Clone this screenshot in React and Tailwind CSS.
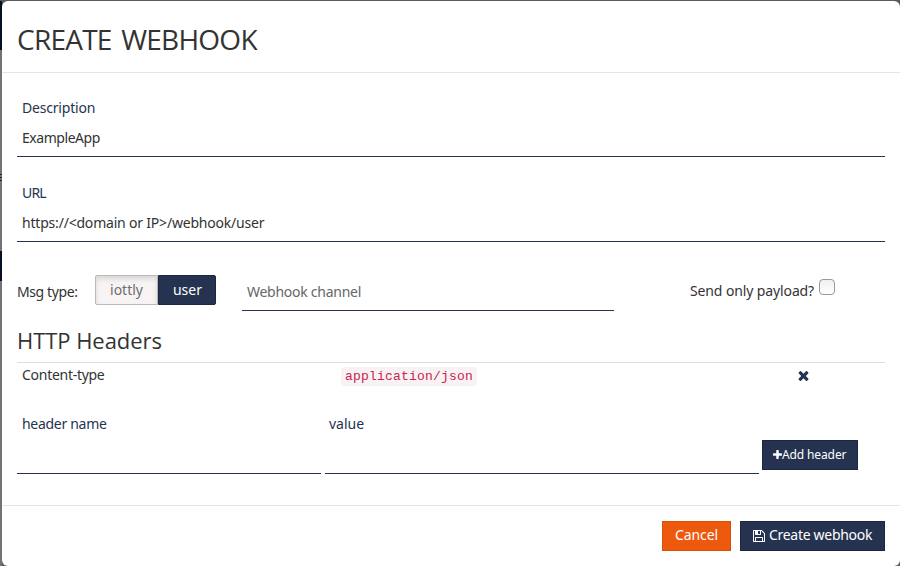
import React from "react";

const PLUS =
  "M1600 736v192q0 40-28 68t-68 28h-416v416q0 40-28 68t-68 28h-192q-40 0-68-28t-28-68v-416h-416q-40 0-68-28t-28-68v-192q0-40 28-68t68-28h416v-416q0-40 28-68t68-28h192q40 0 68 28t28 68v416h416q40 0 68 28t28 68z";
const TIMES =
  "M1490 1322q0 40-28 68l-136 136q-28 28-68 28t-68-28l-294-294-294 294q-28 28-68 28t-68-28l-136-136q-28-28-28-68t28-68l294-294-294-294q-28-28-28-68t28-68l136-136q28-28 68-28t68 28l294 294 294-294q28-28 68-28t68 28l136 136q28 28 28 68t-28 68l-294 294 294 294q28 28 28 68z";
const FLOPPY =
  "M384 1536h768v-384h-768v384zm896 0h128v-896q0-14-10-38.5t-20-34.5l-281-281q-10-10-34-20t-39-10v416q0 40-28 68t-68 28h-576q-40 0-68-28t-28-68v-416h-128v1280h128v-416q0-40 28-68t68-28h832q40 0 68 28t28 68v416zm-384-928v-320q0-13-9.5-22.5t-22.5-9.5h-192q-13 0-22.5 9.5t-9.5 22.5v320q0 13 9.5 22.5t22.5 9.5h192q13 0 22.5-9.5t9.5-22.5zm640 32v928q0 40-28 68t-68 28h-1344q-40 0-68-28t-28-68v-1344q0-40 28-68t68-28h928q40 0 88 20t76 48l280 280q28 28 48 76t20 88z";

function Icon({ path, box = "0 0 1792 1792", className }) {
  return (
    <svg viewBox={box} className={className} fill="currentColor" aria-hidden="true">
      <path d={path} />
    </svg>
  );
}

function Field({ label, value, labelClass, valueClass }) {
  return (
    <div className="flex h-[59px] flex-col border-b border-[#253350] pl-[5px]">
      <label className={`h-5 leading-5 text-[#253350] ${labelClass}`}>{label}</label>
      <span className={`mt-[10px] h-5 whitespace-nowrap leading-5 text-[#333] ${valueClass}`}>{value}</span>
    </div>
  );
}

export default function App() {
  return (
    <div className="flex h-[566px] w-[900px] overflow-hidden bg-[#5b5b5f] pt-px font-['Noto_Sans',sans-serif] text-[14px]">
      <div className="flex w-[2px] shrink-0 flex-col bg-[#737375]">
        <div className="h-[49px] bg-[#061022]" />
        <div className="mt-[124px] h-px bg-[#222]" />
        <div className="mt-[2px] h-px bg-[#222]" />
        <div className="mt-[2px] h-px bg-[#222]" />
        <div className="mt-[70px] h-[30px] bg-[#061022]" />
      </div>
      <div className="flex h-[565px] w-[898px] flex-col rounded-[6px] bg-white">
        <header className="flex h-[72px] items-center border-b border-[#e5e5e5] px-[15px] pt-[5px]">
          <h1 className="whitespace-nowrap font-['Open_Sans',sans-serif] text-[28px] font-normal leading-[33px] tracking-[-0.75px] [word-spacing:3px] text-[#333]">
            CREATE WEBHOOK
          </h1>
        </header>

        <main className="flex h-[432px] flex-col px-[15px] pt-[25px]">
          <Field label="Description" value="ExampleApp" labelClass="tracking-[-0.2px]" valueClass="tracking-[-0.45px]" />
          <div className="h-[26px]" />
          <Field label="URL" value="https://<domain or IP>/webhook/user" labelClass="tracking-[-0.8px]" valueClass="tracking-[-0.2px]" />

          <div className="mt-[33px] flex h-9 items-start text-[#333]">
            <span className="mt-[7px] w-[78px] whitespace-nowrap leading-5 tracking-[-0.4px]">Msg type:</span>
            <div className="flex h-[30px] w-[121px]">
              <button className="w-[63px] rounded-l-[2px] border border-[#bcb9ba] bg-[#f8f4f4] pb-px text-[#6f6d70] shadow-[inset_0_3px_5px_rgba(0,0,0,0.125)]">iottly</button>
              <button className="w-[58px] rounded-r-[2px] border border-[#1b2640] bg-[#253350] pb-px pl-px text-white">user</button>
            </div>
            <div className="ml-[26px] h-9 w-[372px] border-b border-[#253350] pl-[5px] pt-[7px] leading-5 tracking-[-0.26px] text-[#666]">
              <span>Webhook channel</span>
            </div>
            <label className="ml-[76px] mt-[6px] w-[125px] whitespace-nowrap leading-5 tracking-[-0.12px]">Send only payload?</label>
            <span className="ml-1 mt-1 size-4 shrink-0 rounded-[4px] border border-[#999] bg-gradient-to-b from-[#f0f0f0] to-white" />
          </div>

          <h2 className="mt-[14px] h-[38px] border-b border-[#ddd] font-['Open_Sans',sans-serif] text-[22px] leading-[30px] tracking-[-0.05px] text-[#333]">
            HTTP Headers
          </h2>
          <div className="flex h-[26px] items-center pl-[5px] text-[#333]">
            <span className="mb-[2px] w-[319px] leading-5 tracking-[-0.28px]">Content-type</span>
            <code className="h-[19px] w-[136px] rounded-[4px] bg-[#f9f2f4] pl-1 font-['Liberation_Mono',monospace] text-[13px] leading-[19px] tracking-[0.2px] text-[#c7254e]">
              application/json
            </code>
            <button className="mb-px ml-[319px] text-[#253350]" aria-label="Remove">
              <Icon path={TIMES} className="size-[15px]" />
            </button>
          </div>

          <div className="mt-[25px] flex items-start text-[#253350]">
            <div className="h-[60px] w-[304px] border-b border-[#253350] pl-[5px] leading-5 tracking-[-0.3px]">header name</div>
            <div className="ml-1 h-[60px] w-[434px] border-b border-[#253350] pl-1 leading-5">value</div>
            <button className="ml-[3px] mt-[26px] flex h-[30px] w-24 items-center whitespace-nowrap border border-[#1b2640] bg-[#253350] pl-[10px] text-[12px] text-white">
              <Icon path={PLUS} box="192 128 1408 1408" className="mb-px size-[9px] shrink-0" />
              <span className="tracking-[-0.12px]">Add header</span>
            </button>
          </div>
        </main>

        <footer className="flex h-[61px] justify-end gap-[9px] border-t border-[#e5e5e5] pr-[15px] pt-[15px] text-white">
          <button className="h-[30px] w-[69px] border border-[#d6500b] bg-[#ed590d] pb-[3px] tracking-[-0.1px]">Cancel</button>
          <button className="flex h-[30px] w-[145px] items-center whitespace-nowrap border border-[#1b2640] bg-[#253350] pb-[3px] pl-3">
            <Icon path={FLOPPY} box="0 128 1536 1536" className="mt-[2px] size-3 shrink-0" />
            <span className="ml-1 tracking-[-0.3px]">Create webhook</span>
          </button>
        </footer>
      </div>
    </div>
  );
}
